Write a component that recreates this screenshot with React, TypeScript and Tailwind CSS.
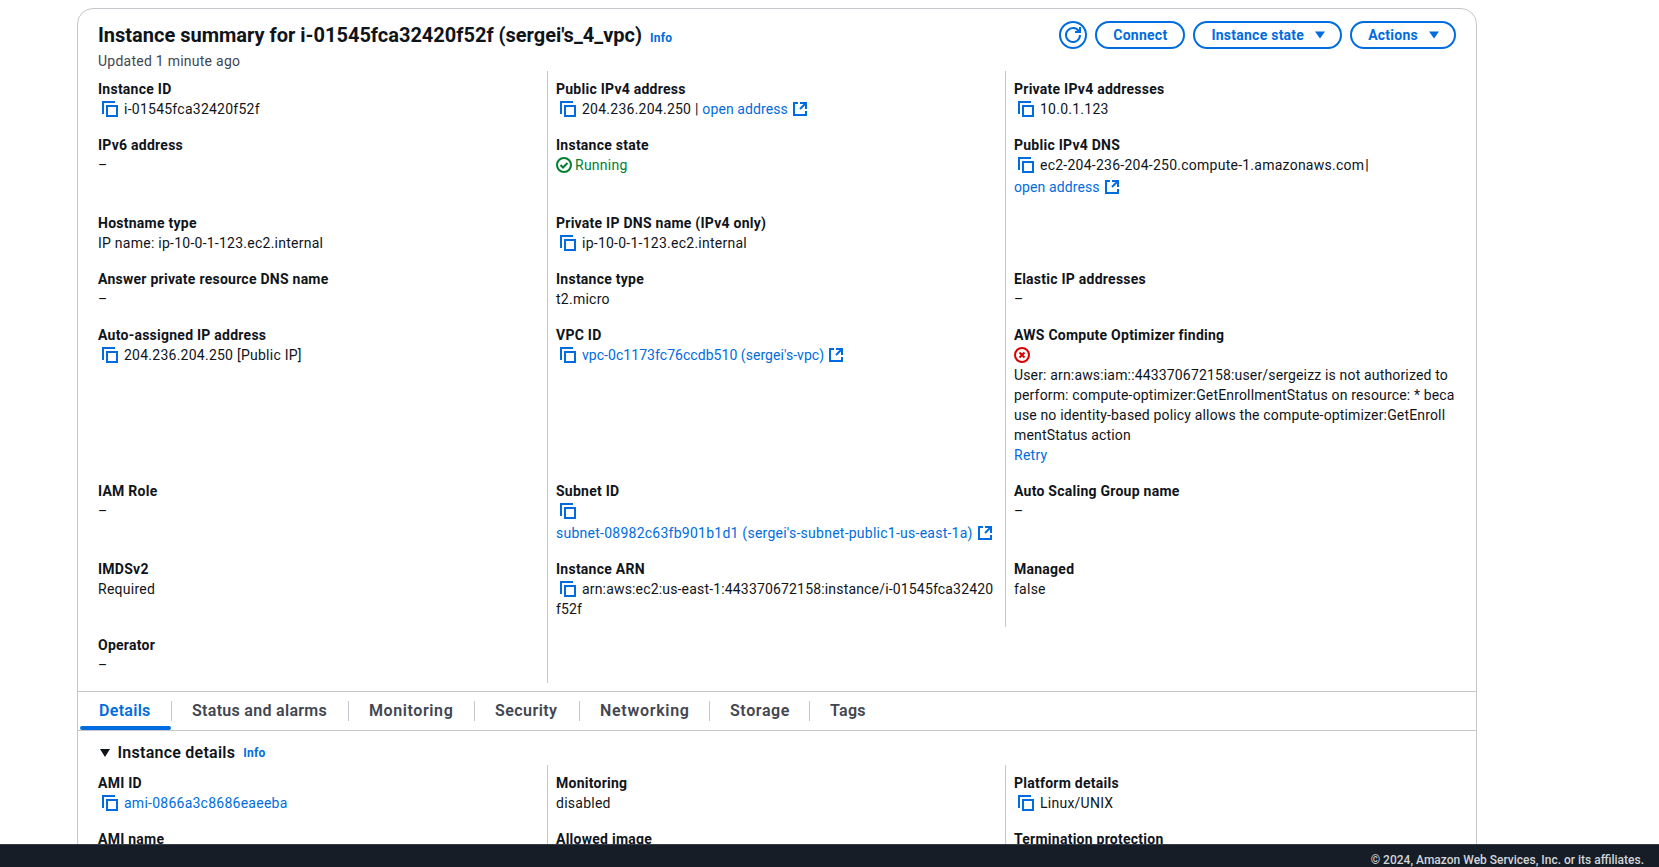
import type { ReactNode } from "react";

const font = "font-['Roboto','Liberation_Sans',sans-serif]";

function CopyIcon() {
  return (
    <svg viewBox="0 0 16 16" fill="none" stroke="#006ce0" strokeWidth="2" className="ml-1 mr-1.5 h-4 w-4 shrink-0">
      <path d="M1 13V1h12" />
      <rect x="5" y="5" width="10" height="10" />
    </svg>
  );
}

function ExternalIcon() {
  return (
    <svg viewBox="0 0 16 16" fill="none" stroke="#006ce0" strokeWidth="2" className="ml-1 inline-block h-4 w-4 align-[-3px]">
      <path d="M14 8V2H8" />
      <path d="M14 2 8 8" />
      <path d="M6 2H2v12h12v-4" />
    </svg>
  );
}

function Caret() {
  return (
    <svg viewBox="0 0 16 16" fill="#006ce0" className="h-4 w-4">
      <path d="M3 4.5h10l-5 7z" />
    </svg>
  );
}

function A({ children }: { children: ReactNode }) {
  return <a className="text-[#006ce0]">{children}</a>;
}

function Copy({ children }: { children: ReactNode }) {
  return (
    <div className="flex items-center">
      <CopyIcon />
      <span>{children}</span>
    </div>
  );
}

function Cell({ label, children, col, noLine }: { label?: string; children?: ReactNode; col: number; noLine?: boolean }) {
  const line = col === 0 ? "pr-2" : noLine ? "border-l border-transparent pl-2" : "border-l border-[#c6c6cd] pl-2";
  return (
    <div className={`py-2 ${line}`}>
      {label && <div className="font-bold">{label}</div>}
      {children}
    </div>
  );
}

function PillButton({ children, caret }: { children: ReactNode; caret?: boolean }) {
  return (
    <button className={`flex h-7 items-center gap-2 rounded-full border-2 border-[#006ce0] bg-white font-bold text-[#006ce0] ${caret ? "pl-4 pr-3" : "px-4"}`}>
      {children}
      {caret && <Caret />}
    </button>
  );
}

const tabs = [
  { name: "Status and alarms", width: "w-[177px] tracking-[0.3px]" },
  { name: "Monitoring", width: "w-[126px] tracking-[0.6px]" },
  { name: "Security", width: "w-[105px] tracking-[0.45px]" },
  { name: "Networking", width: "w-[130px] tracking-[0.7px]" },
  { name: "Storage", width: "w-[100px] tracking-[0.6px]" },
  { name: "Tags", width: "w-[80px] tracking-[0.3px]" },
];

export default function App() {
  return (
    <div className={`relative h-screen overflow-hidden bg-white pt-2 text-sm leading-5 tracking-[0.25px] text-[#0f141a] ${font}`}>
      <div className="ml-[77px] w-[1400px] rounded-t-2xl border border-[#c6c6cd] pb-4">
        <div className="flex justify-between pl-5 pr-5 pt-3">
          <div className="pt-0.5">
            <h1 className="flex items-baseline text-xl font-bold leading-6 tracking-normal">
              Instance summary for i-01545fca32420f52f (sergei's_4_vpc)
              <span className="ml-2 text-xs font-bold tracking-[0.25px] text-[#006ce0]">Info</span>
            </h1>
            <div className="mt-1 text-[#424650]">Updated 1 minute ago</div>
          </div>
          <div className="flex gap-2">
            <button className="flex h-7 w-7 items-center justify-center rounded-full border-2 border-[#006ce0]">
              <svg viewBox="0 0 16 16" fill="none" stroke="#006ce0" strokeWidth="2" className="h-4 w-4">
                <path d="M10 5h5V0" />
                <path d="M15 8a7 7 0 1 1-1.02-3.62" />
              </svg>
            </button>
            <PillButton>Connect</PillButton>
            <PillButton caret>Instance state</PillButton>
            <PillButton caret>Actions</PillButton>
          </div>
        </div>

        <div className="grid grid-cols-[449px_458px_1fr] pl-5 pr-5">
          <Cell col={0} label="Instance ID"><Copy>i-01545fca32420f52f</Copy></Cell>
          <Cell col={1} label="Public IPv4 address">
            <Copy>204.236.204.250 | <span className="tracking-[0.1px]"><A>open address<ExternalIcon /></A></span></Copy>
          </Cell>
          <Cell col={2} label="Private IPv4 addresses"><Copy>10.0.1.123</Copy></Cell>

          <Cell col={0} label="IPv6 address">–</Cell>
          <Cell col={1} label="Instance state">
            <div className="flex items-center gap-[3px] text-[#00802f]">
              <svg viewBox="0 0 16 16" fill="none" stroke="#00802f" strokeWidth="2" className="h-4 w-4">
                <circle cx="8" cy="8" r="7" />
                <path d="m4.5 8 2.5 2.5L11.5 6" />
              </svg>
              Running
            </div>
          </Cell>
          <Cell col={2} label="Public IPv4 DNS">
            <Copy>ec2-204-236-204-250.compute-1.amazonaws.com<span className="ml-px font-medium">|</span></Copy>
            <div className="mt-0.5 tracking-[0.1px]"><A>open address<ExternalIcon /></A></div>
          </Cell>

          <Cell col={0} label="Hostname type">IP name: ip-10-0-1-123.ec2.internal</Cell>
          <Cell col={1} label="Private IP DNS name (IPv4 only)"><Copy>ip-10-0-1-123.ec2.internal</Copy></Cell>
          <Cell col={2} />

          <Cell col={0} label="Answer private resource DNS name">–</Cell>
          <Cell col={1} label="Instance type">t2.micro</Cell>
          <Cell col={2} label="Elastic IP addresses">–</Cell>

          <Cell col={0} label="Auto-assigned IP address"><Copy>204.236.204.250 [Public IP]</Copy></Cell>
          <Cell col={1} label="VPC ID">
            <div className="tracking-[0.05px]">
              <Copy><A>vpc-0c1173fc76ccdb510 (sergei's-vpc)<ExternalIcon /></A></Copy>
            </div>
          </Cell>
          <Cell col={2} label="AWS Compute Optimizer finding">
            <svg viewBox="0 0 16 16" fill="none" stroke="#db0000" strokeWidth="2" className="my-0.5 h-4 w-4">
              <circle cx="8" cy="8" r="7" />
              <path d="m5.5 5.5 5 5M10.5 5.5l-5 5" />
            </svg>
            <div className="whitespace-nowrap tracking-[0.16px]">
              <div>User: arn:aws:iam::443370672158:user/sergeizz is not authorized to</div>
              <div>perform: compute-optimizer:GetEnrollmentStatus on resource: * beca</div>
              <div>use no identity-based policy allows the compute-optimizer:GetEnroll</div>
              <div>mentStatus action</div>
            </div>
            <A>Retry</A>
          </Cell>

          <Cell col={0} label="IAM Role">–</Cell>
          <Cell col={1} label="Subnet ID">
            <div className="flex h-5 items-center"><CopyIcon /></div>
            <div className="mt-0.5"><A>subnet-08982c63fb901b1d1 (sergei's-subnet-public1-us-east-1a)<ExternalIcon /></A></div>
          </Cell>
          <Cell col={2} label="Auto Scaling Group name">–</Cell>

          <Cell col={0} label="IMDSv2">Required</Cell>
          <Cell col={1} label="Instance ARN">
            <div className="tracking-[0.17px]">
              <Copy>arn:aws:ec2:us-east-1:443370672158:instance/i-01545fca32420</Copy>
              <div>f52f</div>
            </div>
          </Cell>
          <Cell col={2} label="Managed">false</Cell>

          <Cell col={0} label="Operator">–</Cell>
          <Cell col={1} />
          <Cell col={2} noLine />
        </div>

        <div className="mt-2 flex h-[40px] items-center border-y border-[#c6c6cd] text-base font-semibold text-[#424650]">
          <div className="relative ml-0.5 flex h-full w-[91px] items-center pb-px pl-[19px] tracking-[0.3px] text-[#006ce0]">
            Details
            <div className="absolute inset-x-0 bottom-0 h-1 rounded-full bg-[#006ce0]" />
          </div>
          {tabs.map((tab) => (
            <div key={tab.name} className={`flex h-5 items-center border-l border-[#c6c6cd] px-5 ${tab.width}`}>
              {tab.name}
            </div>
          ))}
        </div>

        <div className="flex h-[34px] items-center pl-[22px] pt-[10px]">
          <svg viewBox="0 0 10 8" fill="#0f141a" className="mr-[7.5px] h-2 w-2.5">
            <path d="M0 0h10L5 8z" />
          </svg>
          <span className="text-base font-semibold">Instance details</span>
          <span className="ml-2 text-xs font-bold text-[#006ce0]">Info</span>
        </div>

        <div className="grid grid-cols-[449px_458px_1fr] pl-5 pr-5">
          <Cell col={0} label="AMI ID"><Copy><A>ami-0866a3c8686eaeeba</A></Copy></Cell>
          <Cell col={1} label="Monitoring">disabled</Cell>
          <Cell col={2} label="Platform details"><Copy>Linux/UNIX</Copy></Cell>
          <Cell col={0} label="AMI name" />
          <Cell col={1} label="Allowed image" />
          <Cell col={2} label="Termination protection" />
        </div>
      </div>

      <div className="absolute inset-x-0 bottom-0 h-[23px] overflow-hidden border-t border-[#333b47] bg-[#161d26] pr-[15px] pt-[7px] text-right text-xs font-medium leading-4 tracking-normal text-[#d1d5db]">
        © 2024, Amazon Web Services, Inc. or its affiliates.
      </div>
    </div>
  );
}
